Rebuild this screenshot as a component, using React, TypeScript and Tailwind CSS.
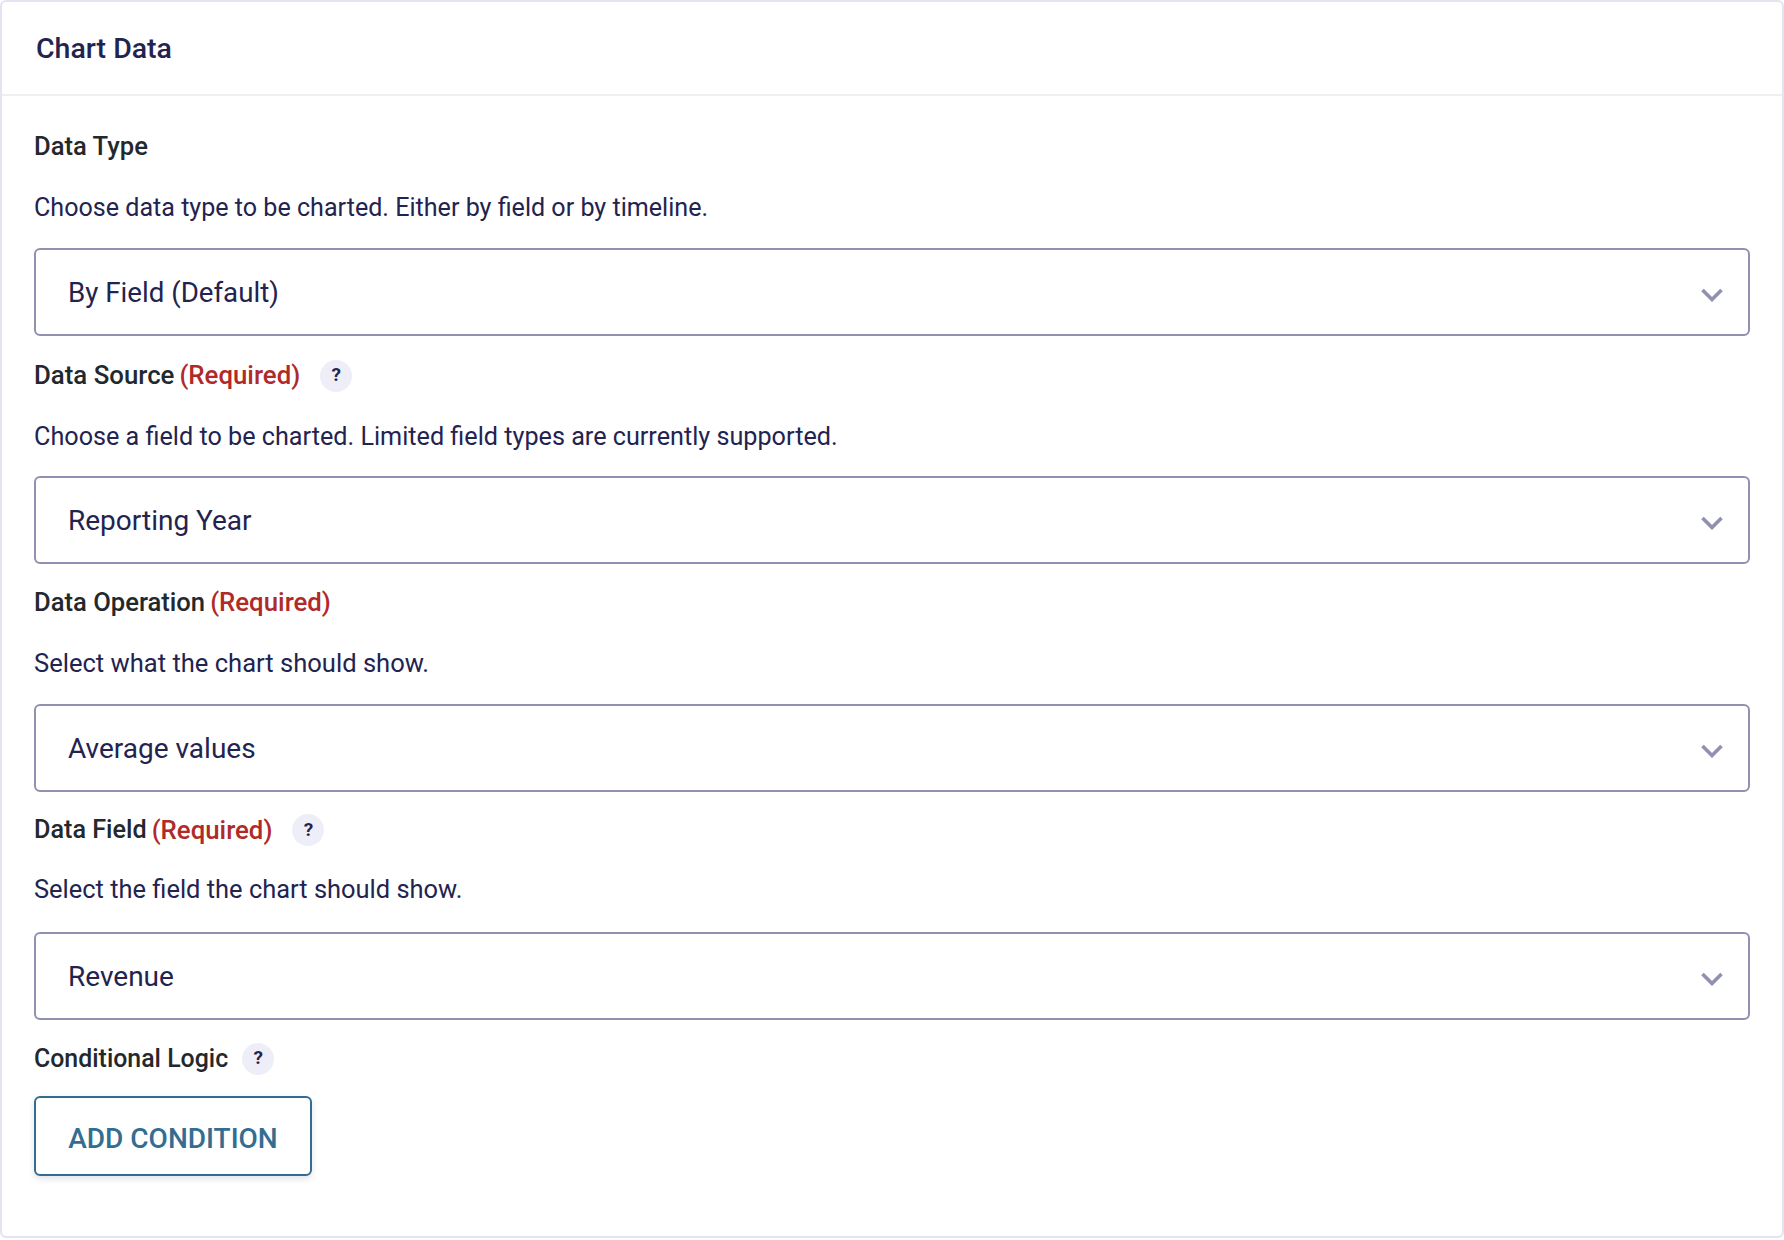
const font = { fontFamily: 'Roboto, sans-serif' };

interface FieldProps {
  label: string;
  required?: boolean;
  help?: boolean;
  description: string;
  value: string;
  rowClass: string;
  labelClass?: string;
  descClass: string;
  valueClass?: string;
}

const Field = ({ label, required, help, description, value, rowClass, labelClass = 'text-[25.6px]', descClass, valueClass = 'text-[28px]' }: FieldProps) => (
  <div className="mb-[22px]">
    <div className={`flex h-8 items-center font-medium text-[#23282d] ${rowClass}`}>
      <span className={labelClass}>{label}</span>
      {required && <span className="ml-[5px] text-[25.8px] text-[#b02a2a]">(Required)</span>}
      {help && (
        <span className="ml-[20px] flex h-8 w-8 items-center justify-center rounded-full bg-[#eeeef9] text-[19px] font-bold text-[#23234f]">
          ?
        </span>
      )}
    </div>
    <p className={`${descClass} leading-8 text-[#23234f]`}>{description}</p>
    <div className="flex h-[88px] items-center justify-between rounded-md border-2 border-[#9090b0] pl-[32px] pr-[25px]">
      <span className={`pt-[2px] text-[#23234f] ${valueClass}`}>{value}</span>
      <svg width="22" height="14" viewBox="0 0 22 14" fill="none" className="mt-[5px]">
        <path d="M1.5 2L11 11.5 20.5 2" stroke="#9090b0" strokeWidth="3.6" />
      </svg>
    </div>
  </div>
);

export default function App() {
  return (
    <div style={font} className="h-[1240px] w-[1784px] bg-white">
      <div className="h-[1238px] rounded-md border-2 border-[#e2e5f1]">
        <div className="flex h-[94px] items-center border-b-2 border-[#eeeef3] pl-[34px] pt-[2px]">
          <h2 className="text-[28.5px] font-medium text-[#23234f]">Chart Data</h2>
        </div>
        <div className="px-[32px] pt-[34px]">
          <Field
            label="Data Type"
            rowClass="pt-[1px]"
            description="Choose data type to be charted. Either by field or by timeline."
            descClass="mt-[30px] mb-[24px] text-[25.1px]"
            value="By Field (Default)"
            valueClass="text-[27.7px]"
          />
          <Field
            label="Data Source"
            required
            help
            rowClass="pt-[3px]"
            labelClass="text-[25.8px]"
            description="Choose a field to be charted. Limited field types are currently supported."
            descClass="mt-[31px] mb-[23px] text-[25.2px]"
            value="Reporting Year"
          />
          <Field
            label="Data Operation"
            required
            rowClass="pt-[1px]"
            description="Select what the chart should show."
            descClass="mt-[29px] mb-[25px] text-[25.55px]"
            value="Average values"
          />
          <Field
            label="Data Field"
            required
            help
            rowClass=""
            labelClass="text-[25.2px]"
            description="Select the field the chart should show."
            descClass="mt-[27px] mb-[27px] text-[25.45px]"
            value="Revenue"
          />
          <div className="flex h-8 items-center pt-[1px] font-medium text-[#23282d]">
            <span className="text-[24.9px]">Conditional Logic</span>
            <span className="ml-[14px] flex h-8 w-8 items-center justify-center rounded-full bg-[#eeeef9] text-[19px] font-bold text-[#23234f]">?</span>
          </div>
          <button className="mt-[22px] h-[80px] w-[278px] rounded-md border-2 border-[#336d92] bg-white pt-[5px] text-[28px] font-medium text-[#336d92] shadow-[0_3px_6px_rgba(35,35,79,0.12)]">
            ADD CONDITION
          </button>
        </div>
      </div>
    </div>
  );
}
